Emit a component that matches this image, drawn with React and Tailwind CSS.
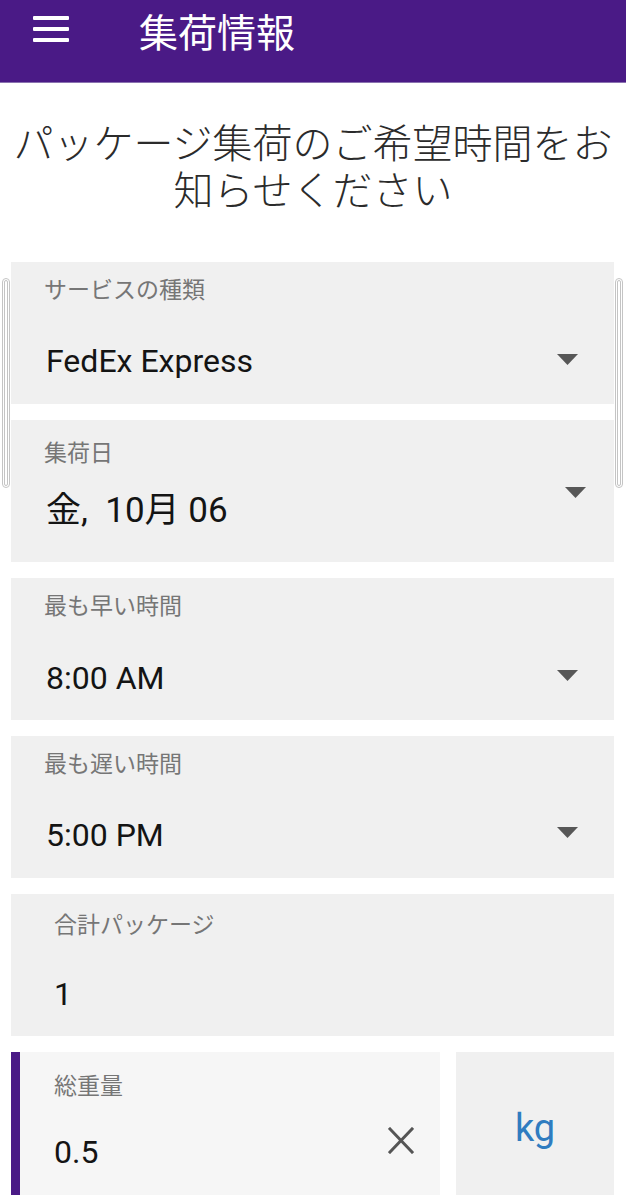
import React from "react";

function Caret({ className }) {
  return (
    <svg className={className} width="21" height="11" viewBox="0 0 21 11">
      <path d="M0 0 H21 L10.5 11 Z" fill="#575757" />
    </svg>
  );
}

function SelectCard({ label, value, labelTop, valueGap, valueSize, caretTop, pr }) {
  return (
    <div className={`h-[142px] bg-[#f0f0f0] flex pl-[33px] ${pr}`}>
      <div className="flex-1 flex flex-col">
        <span className={`${labelTop} text-[23px] leading-[28px] text-[#767676]`}>{label}</span>
        <span className={`${valueGap} ${valueSize} leading-[40px] text-[#141414] ml-[2px] whitespace-pre`}>{value}</span>
      </div>
      <Caret className={caretTop} />
    </div>
  );
}

export default function App() {
  return (
    <div className="relative w-full min-h-[1200px] bg-white overflow-hidden font-['Roboto','Noto_Sans_CJK_JP',sans-serif]">
      <header className="h-[83px] bg-[#4a1a86] border-b border-[#8a72b0] flex items-start">
        <div className="ml-[33px] mt-[16px] flex flex-col gap-[7px]">
          <span className="block w-[36px] h-[4px] bg-white rounded-[1px]" />
          <span className="block w-[36px] h-[4px] bg-white rounded-[1px]" />
          <span className="block w-[36px] h-[4px] bg-white rounded-[1px]" />
        </div>
        <h1 className="ml-[70px] mt-[8px] text-[39px] leading-[44px] text-white font-['Noto_Sans_CJK_JP',sans-serif]">
          集荷情報
        </h1>
      </header>

      <div className="mt-[35px] flex flex-col items-center text-[40px] leading-[47px] font-light text-[#2b2b2b] whitespace-nowrap font-['Noto_Sans_CJK_JP',sans-serif]">
        <div>パッケージ集荷のご希望時間をお</div>
        <div>知らせください</div>
      </div>

      <div className="mt-[50px] pl-[11px] pr-[12px] flex flex-col gap-[16px]">
        <SelectCard
          label="サービスの種類"
          value="FedEx Express"
          labelTop="pt-[15px]"
          valueGap="mt-[36px]"
          valueSize="text-[32px]"
          caretTop="mt-[92px]"
          pr="pr-[36px]"
        />
        <SelectCard
          label="集荷日"
          value="金,  10月 06"
          labelTop="pt-[20px]"
          valueGap="mt-[23px]"
          valueSize="text-[35px]"
          caretTop="mt-[67px]"
          pr="pr-[28px]"
        />
        <SelectCard
          label="最も早い時間"
          value="8:00 AM"
          labelTop="pt-[15px]"
          valueGap="mt-[37px]"
          valueSize="text-[32px]"
          caretTop="mt-[92px]"
          pr="pr-[36px]"
        />
        <SelectCard
          label="最も遅い時間"
          value="5:00 PM"
          labelTop="pt-[15px]"
          valueGap="mt-[36px]"
          valueSize="text-[32px]"
          caretTop="mt-[91px]"
          pr="pr-[36px]"
        />

        <div className="h-[142px] bg-[#f0f0f0] flex flex-col pl-[43px]">
          <span className="pt-[18px] text-[23px] leading-[28px] text-[#767676]">合計パッケージ</span>
          <span className="mt-[34px] text-[32px] leading-[40px] text-[#141414]">1</span>
        </div>

        <div className="h-[143px] flex gap-[16px]">
          <div className="flex-1 bg-[#f6f6f6] border-l-[9px] border-[#4a1a86] flex items-start pl-[34px] pr-[26px]">
            <div className="flex-1 flex flex-col">
              <span className="pt-[21px] text-[23px] leading-[28px] text-[#767676]">総重量</span>
              <span className="mt-[31px] text-[32px] leading-[40px] text-[#141414]">0.5</span>
            </div>
            <svg className="mt-[75px]" width="26" height="27" viewBox="0 0 26 27">
              <path d="M2 2 L24 25 M24 2 L2 25" stroke="#555" strokeWidth="3" strokeLinecap="square" />
            </svg>
          </div>
          <div className="w-[158px] bg-[#f0f0f0] flex items-center justify-center pt-[8px]">
            <span className="text-[38px] leading-[44px] text-[#2f7cc0]">kg</span>
          </div>
        </div>
      </div>

      <div className="absolute left-[2px] top-[278px] w-[8px] h-[210px] rounded-full border-[3px] border-double border-[#c4c4c4]" />
      <div className="absolute left-[615px] top-[278px] w-[8px] h-[210px] rounded-full border-[3px] border-double border-[#c4c4c4]" />
    </div>
  );
}
